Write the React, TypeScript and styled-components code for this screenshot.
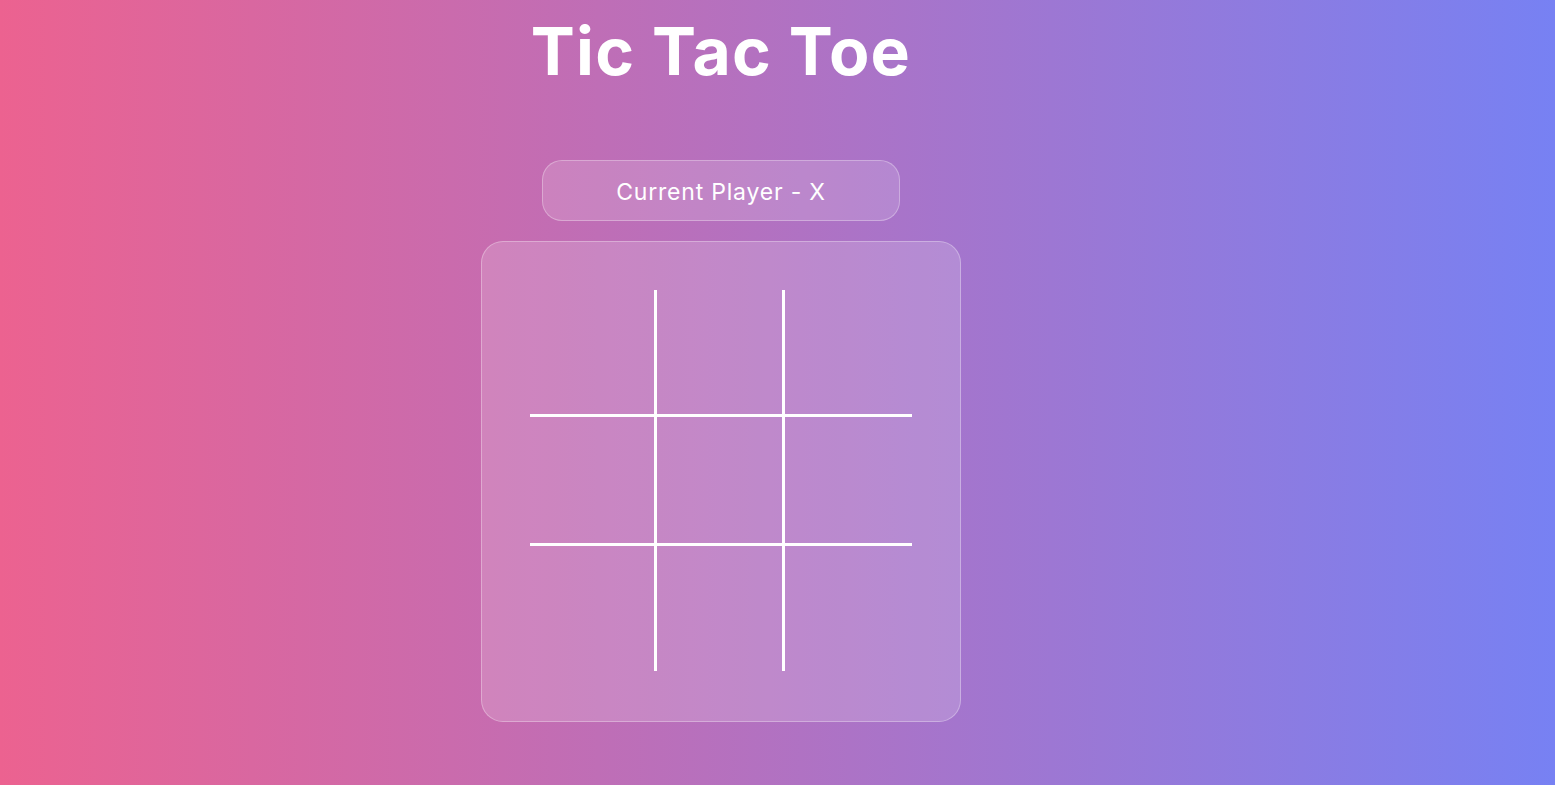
import React, { useState } from "react";
import styled, { createGlobalStyle } from "styled-components";

const GlobalStyle = createGlobalStyle`
  * { box-sizing: border-box; }
  html, body { margin: 0; padding: 0; }
  body {
    font-family: "Inter", "Noto Sans", sans-serif;
    background: linear-gradient(to right, #ec6290, #7781f3);
    min-height: 100vh;
    color: #fff;
  }
`;

const Page = styled.main`
  min-height: 100vh;
  display: flex;
  flex-direction: column;
  align-items: center;
  padding-right: 113px;
`;

const Title = styled.h1`
  margin: 11px 0 0;
  font-size: 66px;
  line-height: 80px;
  font-weight: 700;
  letter-spacing: 1.2px;
  color: #fff;
`;

const Status = styled.div`
  margin-top: 69px;
  width: 358px;
  height: 61px;
  padding-top: 2px;
  display: flex;
  align-items: center;
  justify-content: center;
  border-radius: 20px;
  background: rgba(255, 255, 255, 0.15);
  border: 1px solid rgba(255, 255, 255, 0.3);
  font-size: 23px;
  letter-spacing: 0.8px;
  font-weight: 400;
  color: #fff;
`;

const Panel = styled.section`
  margin-top: 20px;
  width: 480px;
  height: 481px;
  padding: 48px;
  border-radius: 22px;
  background: rgba(255, 255, 255, 0.17);
  border: 1px solid rgba(255, 255, 255, 0.3);
  display: flex;
  align-items: flex-start;
  justify-content: flex-start;
`;

const Board = styled.div`
  display: grid;
  grid-template-columns: 124px 128px 130px;
  grid-template-rows: 124px 129px 128px;
`;

const Cell = styled.button<{ $col: number; $row: number }>`
  appearance: none;
  background: transparent;
  padding: 0;
  margin: 0;
  border: none;
  border-left: ${(p) => (p.$col > 0 ? "3px solid #fff" : "none")};
  border-top: ${(p) => (p.$row > 0 ? "3px solid #fff" : "none")};
  color: #fff;
  font-family: inherit;
  font-size: 64px;
  font-weight: 700;
  cursor: pointer;
`;

export default function App() {
  const [cells, setCells] = useState<string[]>(Array(9).fill(""));
  const [player, setPlayer] = useState<"X" | "O">("X");

  const play = (i: number) => {
    if (cells[i]) return;
    const next = cells.slice();
    next[i] = player;
    setCells(next);
    setPlayer(player === "X" ? "O" : "X");
  };

  return (
    <>
      <GlobalStyle />
      <Page>
        <Title>Tic Tac Toe</Title>
        <Status>Current Player - {player}</Status>
        <Panel>
          <Board>
            {cells.map((v, i) => (
              <Cell
                key={i}
                $col={i % 3}
                $row={Math.floor(i / 3)}
                onClick={() => play(i)}
              >
                {v}
              </Cell>
            ))}
          </Board>
        </Panel>
      </Page>
    </>
  );
}
